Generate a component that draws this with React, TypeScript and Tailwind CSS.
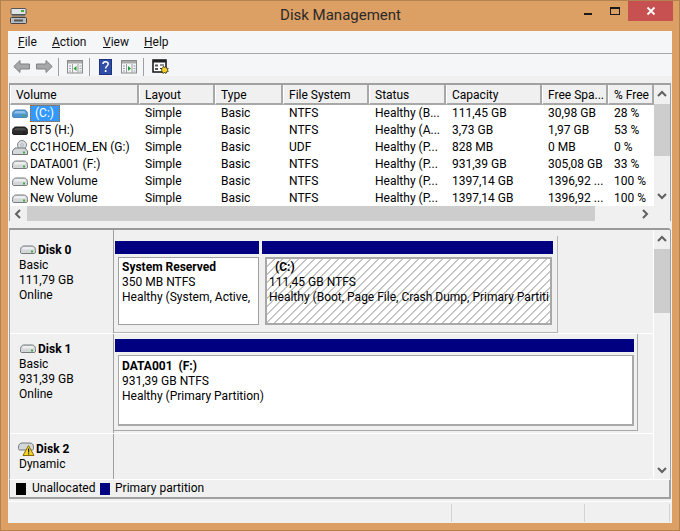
import React from "react";

const columns = [
    { label: "Volume", width: "w-[129px]" },
    { label: "Layout", width: "w-[76px]" },
    { label: "Type", width: "w-[68px]" },
    { label: "File System", width: "w-[86px]" },
    { label: "Status", width: "w-[77px]" },
    { label: "Capacity", width: "w-[96px]" },
    { label: "Free Spa...", width: "w-[66px]" },
    { label: "% Free", width: "w-[46px]" },
];

const rows = [
    { icon: "blue", name: "(C:)", fs: "NTFS", status: "Healthy (B...", cap: "111,45 GB", free: "30,98 GB", pct: "28 %" },
    { icon: "black", name: "BT5 (H:)", fs: "NTFS", status: "Healthy (A...", cap: "3,73 GB", free: "1,97 GB", pct: "53 %" },
    { icon: "cd", name: "CC1HOEM_EN (G:)", fs: "UDF", status: "Healthy (P...", cap: "828 MB", free: "0 MB", pct: "0 %" },
    { icon: "grey", name: "DATA001 (F:)", fs: "NTFS", status: "Healthy (P...", cap: "931,39 GB", free: "305,08 GB", pct: "33 %" },
    { icon: "grey", name: "New Volume", fs: "NTFS", status: "Healthy (P...", cap: "1397,14 GB", free: "1396,92 ...", pct: "100 %" },
    { icon: "grey", name: "New Volume", fs: "NTFS", status: "Healthy (P...", cap: "1397,14 GB", free: "1396,92 ...", pct: "100 %" },
];

function DriveIcon({ tone = "grey" }: { tone?: string }) {
    const body = tone === "blue" ? "#4f94cf" : tone === "black" ? "#2b2b2b" : "#d4d7d9";
    const top = tone === "blue" ? "#8fc1e8" : tone === "black" ? "#4a4a4a" : "#eceeef";
    const stroke = tone === "blue" ? "#4a86b8" : tone === "black" ? "#1c1c1c" : "#777b7e";
    return (
        <svg width="16" height="10" viewBox="0 0 16 10" className="shrink-0">
            <path d="M.5 5.500C.5 2 2.500 1 4 1h8c1.500 0 3.500 1 3.500 4.500v1.500c0 1-.5 1.500-1.500 1.500H2C1 8.500.5 8 .5 7z" fill={body} stroke={stroke} />
            <path d="M2 4.500C2.500 2.800 3.200 2 4.500 2h7c1.300 0 2 .8 2.500 2.500z" fill={top} />
            <rect x="11" y="5.500" width="2" height="2" fill={tone === "black" ? "#1c1c1c" : "#3fae3f"} />
        </svg>
    );
}

function CdIcon() {
    return (
        <svg width="16" height="16" viewBox="0 0 16 16" className="shrink-0">
            <circle cx="10" cy="5" r="4.500" fill="#d9dde0" stroke="#80868a" />
            <circle cx="10" cy="5" r="1.300" fill="#ffffff" stroke="#80868a" strokeWidth="0.600" />
            <path d="M3 8h10l2.500 3v3.500H.5V11z" fill="#d5d8da" stroke="#6f7376" />
            <rect x="11" y="11.500" width="2" height="2" fill="#3fae3f" />
        </svg>
    );
}

function Chevron({ dir }: { dir: "up" | "down" | "left" | "right" }) {
    const d = {
        up: "M1 6l4-4 4 4",
        down: "M1 2l4 4 4-4",
        left: "M6 1L2 5l4 4",
        right: "M3 1l4 4-4 4",
    }[dir];
    return (
        <svg width="10" height="10" viewBox="0 0 10 10" className="shrink-0">
            <path d={d} fill="none" stroke="#606060" strokeWidth="2" />
        </svg>
    );
}

function ArrowIcon({ flip }: { flip?: boolean }) {
    return (
        <svg width="17" height="13" viewBox="0 0 17 13" className={flip ? "-scale-x-100" : ""}>
            <path d="M7 .5L.8 6.500 7 12.500V9h9.500V4H7z" fill="#a6a8aa" stroke="#7f8183" />
        </svg>
    );
}

function PaneIcon({ arrow }: { arrow: "left" | "right" }) {
    return (
        <svg width="16" height="14" viewBox="0 0 16 14">
            <rect x="0.5" y="0.5" width="15" height="12.500" fill="#f4f4f4" stroke="#8a8a8a" />
            <rect x="1" y="1" width="14" height="2.500" fill="#a9a9a9" />
            <path d="M5.500 4v9M11 4v9" stroke="#a0a0a0" />
            <path d="M2 6h2M2 8.500h2M2 11h2M12.500 6h2M12.500 8.500h2M12.500 11h2" stroke="#8fa3b5" />
            <path d={arrow === "left" ? "M9.500 6v5L6.500 8.500z" : "M7 6v5l3-2.500z"} fill="#21a035" />
        </svg>
    );
}

function HelpIcon() {
    return (
        <svg width="13" height="16" viewBox="0 0 13 16">
            <rect width="13" height="16" fill="#2f4ea8" />
            <rect x="0.5" y="0.5" width="12" height="15" fill="none" stroke="#1d3380" />
            <path d="M4 5c0-3 5.200-3 5.200 0 0 2-2.600 2-2.600 4.500" fill="none" stroke="#ffffff" strokeWidth="1.500" />
            <rect x="5.800" y="11" width="1.700" height="2" fill="#ffffff" />
        </svg>
    );
}

function PropsIcon() {
    return (
        <svg width="17" height="16" viewBox="0 0 17 16">
            <rect x="1" y="1" width="13" height="12" fill="#ffffff" stroke="#111111" strokeWidth="1.500" />
            <rect x="1" y="1" width="13" height="2.500" fill="#222222" />
            <path d="M3 5.500h3v2H3zM3 9h3v2H3z" fill="#555555" />
            <path d="M8 6h4M8 9.500h2" stroke="#222222" />
            <path d="M11.500 7l1 1.500 1.500-1 .5 1.700 1.800.3-1 1.500 1 1.500-1.800.3-.5 1.700-1.500-1-1.500 1-.5-1.700-1.500-.3 1-1.500-1-1.500 1.500-.3z" fill="#f4d21f" stroke="#222222" strokeWidth="0.700" />
        </svg>
    );
}

function WarnDriveIcon() {
    return (
        <svg width="17" height="14" viewBox="0 0 17 14" className="shrink-0">
            <path d="M.5 5C.5 2 2.500 1 4 1h8c1.500 0 3.500 1 3.500 4v1.500c0 1-.5 1.500-1.500 1.500H2C1 8 .5 7.500.5 6.500z" fill="#d4d7d9" stroke="#777b7e" />
            <path d="M10.500 3.500L16 13.500H5z" fill="#f6d32d" stroke="#8a6d00" />
            <rect x="10" y="6.500" width="1.200" height="4" fill="#222222" />
            <rect x="10" y="11.300" width="1.200" height="1.200" fill="#222222" />
        </svg>
    );
}

function Separator() {
    return <div className="w-px h-[18px] bg-[#a0a0a0]" />;
}

function DiskLabel({ name, lines, warn, first }: { name: string; lines: string[]; warn?: boolean; first?: boolean }) {
    return (
        <div className={`w-[104px] shrink-0 pl-[9px] ${first ? "pt-[11px]" : "pt-[6px]"} border-r border-r-[#a0a0a0] bg-[#f0f0f0]`}>
            <div className={warn ? "flex items-center gap-px h-[17px] pt-[2px] -ml-[1px]" : "flex items-center gap-[2px] h-[17px] pt-[2px] ml-[1px]"}>
                <div className="-mt-[2px] shrink-0 flex">{warn ? <WarnDriveIcon /> : <DriveIcon />}</div>
                <span className="font-bold">{name}</span>
            </div>
            {lines.map((line) => (
                <div key={line} className="h-[15px] leading-[15px]">{line}</div>
            ))}
        </div>
    );
}

export default function App() {
    return (
        <div className="w-[680px] h-[531px] flex flex-col bg-[#dc9f64] border border-[#b28351] font-['Roboto',sans-serif] text-[12px] leading-[17px] text-[#000000] overflow-hidden">
            {/* title bar */}
            <div className="h-[30px] shrink-0 flex pl-[9px] pr-[6px]">
                <svg width="17" height="16" viewBox="0 0 17 16" className="mt-[7px]">
                    <rect x="1" y="0.5" width="15" height="6" rx="1" fill="#dfe3e5" stroke="#555555" />
                    <rect x="11" y="2" width="3" height="2" fill="#3fae3f" />
                    <path d="M2 7.500h13M2 9h13" stroke="#777777" />
                    <rect x="0.5" y="9.500" width="16" height="6" rx="1" fill="#b9bdc0" stroke="#444444" />
                    <rect x="4" y="11.500" width="9" height="2" fill="#555555" />
                </svg>
                <div className="flex-1 text-center text-[15px] leading-[28px] text-[#2a2a2a] pl-[80px]">Disk Management</div>
                <div className="flex h-[20px]">
                    <div className="w-[28px] flex justify-center pt-[12px]">
                        <div className="w-[8px] h-[2px] bg-[#1a1a1a]" />
                    </div>
                    <div className="w-[26px] flex justify-center pt-[6px]">
                        <div className="w-[10px] h-[8px] border border-t-2 border-[#1a1a1a]" />
                    </div>
                    <div className="w-[45px] bg-[#c75050] flex items-center justify-center">
                        <svg width="10" height="10" viewBox="0 0 10 10">
                            <path d="M1.500 1.500l7 7M8.500 1.500l-7 7" stroke="#ffffff" strokeWidth="1.800" />
                        </svg>
                    </div>
                </div>
            </div>

            {/* client */}
            <div className="mx-[7px] h-[492px] flex flex-col bg-[#f0f0f0]">
                {/* menu */}
                <div className="h-[23px] shrink-0 flex items-center bg-[#f5f6f7] border-b border-b-[#a8a8a8] pl-[10px] text-[#111111]">
                    <span className="w-[34px]"><u>F</u>ile</span>
                    <span className="w-[51px]"><u>A</u>ction</span>
                    <span className="w-[41px]"><u>V</u>iew</span>
                    <span><u>H</u>elp</span>
                </div>

                {/* toolbar */}
                <div className="h-[22px] shrink-0 flex items-center bg-[#f5f6f7] pl-[5px] pt-[3px]">
                    <ArrowIcon />
                    <div className="w-[6px]" />
                    <ArrowIcon flip />
                    <div className="w-[5px]" />
                    <Separator />
                    <div className="w-[8px]" />
                    <PaneIcon arrow="left" />
                    <div className="w-[6px]" />
                    <Separator />
                    <div className="w-[9px]" />
                    <HelpIcon />
                    <div className="w-[9px]" />
                    <PaneIcon arrow="right" />
                    <div className="w-[6px]" />
                    <Separator />
                    <div className="w-[8px]" />
                    <PropsIcon />
                </div>
                <div className="h-[7px] shrink-0" />

                {/* volume list */}
                <div className="mx-[1px] shrink-0 flex flex-col border-x border-x-[#a0a0a0] border-t-2 border-t-[#a0a0a0] w-[662px]">
                    <div className="flex h-[121px]">
                        <div className="w-[644px] shrink-0">
                            <div className="flex h-[20px]">
                                {columns.map((col) => (
                                    <div key={col.label} className={`${col.width} shrink-0 pl-[5px] pt-px border-l border-l-white border-r-2 border-r-[#a8a8a8] border-b-2 border-b-[#a8a8a8] bg-[#f0f0f0] leading-[19px] whitespace-nowrap overflow-hidden`}>
                                        {col.label}
                                    </div>
                                ))}
                            </div>
                            <div className="h-[101px] overflow-hidden bg-white">
                                {rows.map((row, i) => (
                                    <div key={i} className="flex h-[17px] items-center whitespace-nowrap">
                                        <div className="w-[129px] shrink-0 flex items-center pl-[2px] gap-[2px]">
                                            {row.icon === "cd" ? <CdIcon /> : <DriveIcon tone={row.icon} />}
                                            {i === 0 ? (
                                                <span className="bg-[#3399ff] text-white pl-[5px] pr-[3px] outline-1 outline-dotted outline-[#c06000] -outline-offset-1 h-[17px] w-[30px]">{row.name}</span>
                                            ) : (
                                                <span>{row.name}</span>
                                            )}
                                        </div>
                                        <div className="w-[76px] shrink-0 pl-[6px]">Simple</div>
                                        <div className="w-[68px] shrink-0 pl-[6px]">Basic</div>
                                        <div className="w-[86px] shrink-0 pl-[6px]">{row.fs}</div>
                                        <div className="w-[77px] shrink-0 pl-[6px]">{row.status}</div>
                                        <div className="w-[96px] shrink-0 pl-[6px]">{row.cap}</div>
                                        <div className="w-[66px] shrink-0 pl-[6px]">{row.free}</div>
                                        <div className="w-[46px] shrink-0 pl-[6px]">{row.pct}</div>
                                    </div>
                                ))}
                            </div>
                        </div>
                        <div className="w-[16px] shrink-0 flex flex-col items-center bg-[#f0f0f0]">
                            <div className="h-[19px] flex items-center justify-center"><Chevron dir="up" /></div>
                            <div className="w-[16px] h-[52px] bg-[#cdcdcd]" />
                            <div className="flex-1 flex items-end pb-[4px]"><Chevron dir="down" /></div>
                        </div>
                    </div>
                    <div className="flex h-[15px] bg-[#f0f0f0]">
                        <div className="w-[17px] flex items-center justify-center"><Chevron dir="left" /></div>
                        <div className="w-[568px] bg-[#cdcdcd]" />
                        <div className="flex-1 flex items-center justify-end pr-[20px]"><Chevron dir="right" /></div>
                    </div>
                </div>

                {/* splitter */}
                <div className="h-[9px] shrink-0 mx-[1px] w-[662px] border-b-2 border-b-[#9a9a9a] border-r-2 border-r-[#f0f0f0]" />

                {/* disk map */}
                <div className="mx-[1px] w-[662px] h-[249px] shrink-0 flex border-l border-l-[#a0a0a0] border-r border-r-[#a0a0a0]">
                    <div className="w-[644px] shrink-0 border-r border-r-white flex flex-col">
                        <div className="h-[104px] flex border-b border-b-white">
                            <DiskLabel first name="Disk 0" lines={["Basic", "111,79 GB", "Online"]} />
                            <div className="pt-[6px]">
                                <div className="w-[444px] h-[97px] flex border-r border-b border-[#b4b4b4] pl-px pt-[5px]">
                                    <div className="w-[147px] flex flex-col">
                                        <div className="w-[144px] h-[13px] bg-[#000080]" />
                                        <div className="mt-[3px] ml-[3px] w-[141px] h-[68px] bg-white border border-[#a0a0a0] pl-[3px] pt-[2px] overflow-hidden whitespace-nowrap">
                                            <div className="font-bold leading-[15px]">System Reserved</div>
                                            <div className="leading-[15px]">350 MB NTFS</div>
                                            <div className="leading-[15px]">Healthy (System, Active,</div>
                                        </div>
                                    </div>
                                    <div className="w-[291px] flex flex-col">
                                        <div className="h-[13px] bg-[#000080]" />
                                        <div className="mt-[3px] ml-[3px] w-[287px] h-[68px] border-2 border-[#a8a8a8] pl-[2px] pt-[1px] overflow-hidden whitespace-nowrap bg-[repeating-linear-gradient(135deg,#ffffff_0,#ffffff_4.700px,#c4c4c4_4.700px,#c4c4c4_5.660px)]">
                                            <div className="font-bold leading-[15px] pl-[6px]">(C:)</div>
                                            <div className="leading-[15px]">111,45 GB NTFS</div>
                                            <div className="leading-[15px]">Healthy (Boot, Page File, Crash Dump, Primary Partiti</div>
                                        </div>
                                    </div>
                                </div>
                            </div>
                        </div>
                        <div className="h-[100px] flex border-b border-b-white">
                            <DiskLabel name="Disk 1" lines={["Basic", "931,39 GB", "Online"]} />
                            <div>
                                <div className="w-[524px] h-[97px] flex flex-col border-r border-b border-[#a8a8a8] pl-px pt-[5px]">
                                    <div className="w-[519px] h-[13px] bg-[#000080]" />
                                    <div className="mt-[3px] ml-[3px] w-[516px] h-[71px] bg-white border-r-2 border-b-2 border-t border-l border-[#a8a8a8] pl-[3px] pt-[3px] whitespace-nowrap">
                                        <div className="font-bold leading-[15px]">DATA001&nbsp; (F:)</div>
                                        <div className="leading-[15px]">931,39 GB NTFS</div>
                                        <div className="leading-[15px]">Healthy (Primary Partition)</div>
                                    </div>
                                </div>
                            </div>
                        </div>
                        <div className="flex-1 flex">
                            <DiskLabel name="Disk 2" lines={["Dynamic"]} warn />
                            <div className="flex-1" />
                        </div>
                    </div>
                    <div className="w-[16px] shrink-0 flex flex-col items-center">
                        <div className="h-[17px] flex items-center justify-center mt-[1px]"><Chevron dir="up" /></div>
                        <div className="w-[16px] h-[64px] bg-[#cdcdcd] mt-px" />
                        <div className="flex-1 flex items-end pb-[3px]"><Chevron dir="down" /></div>
                    </div>
                </div>

                {/* legend */}
                <div className="mx-[1px] w-[662px] h-[20px] shrink-0 flex items-center border-t border-t-white border-l border-l-[#a0a0a0] border-b-2 border-b-[#a0a0a0] border-r-2 border-r-[#a0a0a0] pl-[6px]">
                    <div className="w-[10px] h-[12px] bg-black" />
                    <span className="ml-[6px] w-[68px]">Unallocated</span>
                    <div className="w-[10px] h-[12px] bg-[#000080]" />
                    <span className="ml-[5px]">Primary partition</span>
                </div>

                {/* status bar */}
                <div className="mt-[2px] flex-1 flex border-t border-t-white pt-[2px] pb-px">
                    <div className="w-[444px] border-r border-r-[#d4d4d4]" />
                    <div className="w-[133px] border-r border-r-[#d4d4d4]" />
                    <div className="w-[85px] border-r border-r-[#d4d4d4]" />
                </div>
            </div>
        </div>
    );
}
